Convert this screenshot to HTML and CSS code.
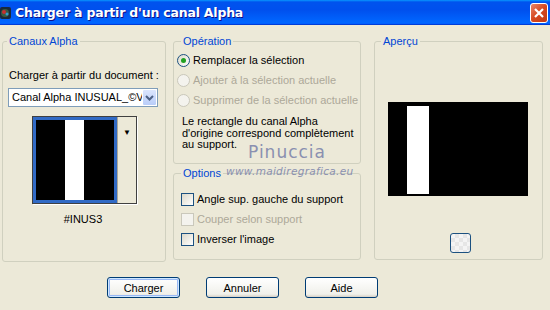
FILE: index.html
```html
<!DOCTYPE html>
<html lang="fr">
<head>
    <meta charset="UTF-8">
    <title>Charger à partir d'un canal Alpha</title>
    <link rel="stylesheet" href="styles.css">
</head>
<body>
    <div class="window">
        <!-- Title Bar -->
        <div class="titlebar">
            <svg class="app-icon" width="11" height="14" viewBox="0 0 11 14">
                <rect x="0" y="1" width="11" height="12" rx="2" fill="#1a2a3a"/>
                <circle cx="5" cy="7" r="4" fill="#3a5a40"/>
                <circle cx="4" cy="6" r="2" fill="#c83030"/>
                <circle cx="7" cy="8" r="1.5" fill="#30a0d0"/>
            </svg>
            <span class="title">Charger à partir d'un canal Alpha</span>
            <div class="close-btn">
                <svg width="12" height="12" viewBox="0 0 12 12">
                    <path d="M2 2 L10 10 M10 2 L2 10" stroke="#fff" stroke-width="2.2"/>
                </svg>
            </div>
        </div>

        <div class="content">
            <div class="panels">
                <!-- Canaux Alpha -->
                <fieldset class="group group-alpha">
                    <legend>Canaux Alpha</legend>
                    <div class="field-label">Charger à partir du document :</div>
                    <div class="select">
                        <span class="select-text">Canal Alpha INUSUAL_©Virginia</span>
                        <span class="select-btn">
                            <svg width="9" height="6" viewBox="0 0 9 6">
                                <path d="M1 1 L4.5 4.5 L8 1" fill="none" stroke="#4d6185" stroke-width="2"/>
                            </svg>
                        </span>
                    </div>
                    <div class="thumb-picker">
                        <div class="thumb">
                            <div class="thumb-bar"></div>
                        </div>
                        <div class="thumb-drop">&#9660;</div>
                    </div>
                    <div class="thumb-name">#INUS3</div>
                </fieldset>

                <div class="middle">
                    <!-- Opération -->
                    <fieldset class="group group-op">
                        <legend>Opération</legend>
                        <div class="option-row">
                            <span class="radio checked"></span>
                            <span>Remplacer la sélection</span>
                        </div>
                        <div class="option-row disabled">
                            <span class="radio"></span>
                            <span>Ajouter à la sélection actuelle</span>
                        </div>
                        <div class="option-row disabled">
                            <span class="radio"></span>
                            <span>Supprimer de la sélection actuelle</span>
                        </div>
                        <p class="note">Le rectangle du canal Alpha d'origine correspond complètement au support.</p>
                    </fieldset>

                    <!-- Options -->
                    <fieldset class="group group-opts">
                        <legend>Options</legend>
                        <div class="check-row">
                            <span class="checkbox"></span>
                            <span>Angle sup. gauche du support</span>
                        </div>
                        <div class="check-row disabled">
                            <span class="checkbox"></span>
                            <span>Couper selon support</span>
                        </div>
                        <div class="check-row">
                            <span class="checkbox"></span>
                            <span>Inverser l'image</span>
                        </div>
                    </fieldset>
                </div>

                <!-- Aperçu -->
                <fieldset class="group group-preview">
                    <legend>Aperçu</legend>
                    <div class="preview">
                        <div class="preview-bar"></div>
                    </div>
                    <div class="preview-btn"></div>
                </fieldset>
            </div>

            <!-- Buttons -->
            <div class="actions">
                <button class="btn btn-default">Charger</button>
                <button class="btn">Annuler</button>
                <button class="btn">Aide</button>
            </div>
        </div>

        <!-- Watermark -->
        <div class="watermark">
            <div class="wm-name">Pinuccia</div>
            <div class="wm-url">www.maidiregrafica.eu</div>
        </div>
    </div>
</body>
</html>
```

FILE: styles.css
```css
/* General Reset */
* {
    margin: 0;
    padding: 0;
    box-sizing: border-box;
}

body {
    background-color: #ece9d8;
    font-family: "Liberation Sans", Arial, sans-serif;
    font-size: 11px;
    color: #000;
}

.window {
    position: relative;
    width: 550px;
    height: 310px;
    overflow: hidden;
    background-color: #ece9d8;
}

/* Title Bar */
.titlebar {
    height: 25px;
    display: flex;
    align-items: center;
    background: linear-gradient(#0997ff 0, #0053ee 8%, #0050ee 40%, #0066ff 88%, #0066ff 93%, #005bff 95%, #003dd7 96%, #003dd7 100%);
    color: #fff;
}

.app-icon {
    margin-left: 0;
    margin-right: 4px;
}

.title {
    flex: 1;
    font-family: "DejaVu Sans", sans-serif;
    font-weight: bold;
    font-size: 12.5px;
    letter-spacing: -0.2px;
    text-shadow: 1px 1px #0f1089;
}

.close-btn {
    width: 18px;
    height: 20px;
    margin-right: 2px;
    margin-top: 1px;
    border: 1px solid #fff;
    border-radius: 3px;
    background: linear-gradient(135deg, #e8866a, #d6471e 50%, #c23a14);
    display: flex;
    align-items: center;
    justify-content: center;
}

/* Content */
.content {
    padding: 10px 0 0 2px;
}

.panels {
    display: flex;
    align-items: flex-start;
}

.group {
    border: 1px solid #d0d0bf;
    border-radius: 3px;
    padding: 0;
}

.group legend {
    color: #0046d5;
    padding: 0 2px;
    margin-left: 7px;
    line-height: 13px;
}

/* Canaux Alpha */
.group-alpha {
    width: 164px;
    height: 227px;
}

.group-alpha legend {
    margin-left: 4px;
}

.field-label {
    margin: 21px 0 0 6px;
    line-height: 13px;
}

.select {
    display: flex;
    width: 150px;
    height: 19px;
    margin: 6px 0 0 5px;
    border: 1px solid #7f9db9;
    background-color: #fff;
}

.select-text {
    flex: 1;
    overflow: hidden;
    white-space: nowrap;
    padding: 2px 0 0 3px;
}

.select-btn {
    width: 15px;
    height: 17px;
    background: linear-gradient(#dbe5fd, #b9cdf9);
    border: 1px solid #fff;
    border-radius: 2px;
    display: flex;
    align-items: center;
    justify-content: center;
}

.thumb-picker {
    display: flex;
    width: 105px;
    height: 88px;
    margin: 9px 0 0 29px;
    border: 1px solid #404040;
    box-shadow: 1px 1px 0 #fff;
}

.thumb {
    width: 84px;
    border: 3px solid #316ac5;
    background-color: #000;
    padding-left: 29px;
}

.thumb-bar {
    width: 19px;
    height: 100%;
    background-color: #fff;
}

.thumb-drop {
    flex: 1;
    border-left: 1px solid #aca899;
    font-size: 8px;
    text-align: center;
    padding-top: 11px;
}

.thumb-name {
    margin: 9px 0 0 0;
    padding-right: 2px;
    text-align: center;
    line-height: 13px;
}

/* Middle Column */
.middle {
    display: flex;
    flex-direction: column;
    gap: 3px;
    margin-left: 7px;
    width: 188px;
}

.group-op {
    height: 129px;
}

.group-opts {
    height: 93px;
}

.option-row,
.check-row {
    display: flex;
    align-items: center;
    height: 20px;
    white-space: nowrap;
}

.option-row {
    padding-left: 3px;
}

.group-op .option-row:first-of-type {
    margin-top: 2px;
}

.check-row {
    padding-left: 7px;
}

.group-opts .check-row:first-of-type {
    margin-top: 9px;
}

.disabled {
    color: #aca899;
}

.radio {
    width: 13px;
    height: 13px;
    margin-right: 3px;
    border: 1px solid #1c5180;
    border-radius: 50%;
    background: linear-gradient(135deg, #dcd9ca, #fff);
    display: flex;
    align-items: center;
    justify-content: center;
}

.radio.checked::after {
    content: "";
    width: 5px;
    height: 5px;
    border-radius: 50%;
    background-color: #21a121;
}

.disabled .radio,
.disabled .checkbox {
    border-color: #cac8bb;
    background: #f4f3ee;
}

.checkbox {
    width: 13px;
    height: 13px;
    margin-right: 3px;
    border: 1px solid #1c5180;
    background: linear-gradient(135deg, #dcd9ca, #fff);
}

.note {
    margin: 6px 4px 0 8px;
    line-height: 11.7px;
}

/* Aperçu */
.group-preview {
    width: 169px;
    height: 225px;
    margin-left: 13px;
}

.group-preview legend {
    margin-left: 6px;
}

.preview {
    width: 140px;
    height: 94px;
    margin: 54px 0 0 13px;
    background-color: #000;
    padding: 4px 0 2px 19px;
}

.preview-bar {
    width: 22px;
    height: 100%;
    background-color: #fff;
}

.preview-btn {
    width: 21px;
    height: 20px;
    margin: 37px 0 0 75px;
    border: 1px solid #1c5180;
    border-radius: 3px;
    background-color: #f4f4f4;
    background-image:
        linear-gradient(45deg, #e6e6e6 25%, transparent 25%, transparent 75%, #e6e6e6 75%),
        linear-gradient(45deg, #e6e6e6 25%, transparent 25%, transparent 75%, #e6e6e6 75%);
    background-size: 8px 8px;
    background-position: 0 0, 4px 4px;
}

/* Buttons */
.actions {
    display: flex;
    gap: 26px;
    margin: 15px 0 0 105px;
}

.btn {
    width: 73px;
    height: 21px;
    font-family: "Liberation Sans", Arial, sans-serif;
    font-size: 11px;
    color: #000;
    border: 1px solid #003c74;
    border-radius: 3px;
    background: linear-gradient(#fff, #f0f0ea 85%, #d6d0c5);
}

.btn-default {
    box-shadow: inset 0 0 0 1px #cee7ff, inset 0 0 0 2px #98b8f5;
}

/* Watermark */
.watermark {
    position: absolute;
    left: 226px;
    top: 143px;
    width: 122px;
    text-align: center;
    color: #8a90b0;
    pointer-events: none;
}

.wm-name {
    font-family: "DejaVu Sans", sans-serif;
    font-size: 17px;
    letter-spacing: 1px;
    line-height: 18px;
}

.wm-url {
    font-family: "DejaVu Sans", sans-serif;
    font-size: 10.5px;
    font-style: italic;
    line-height: 14px;
    letter-spacing: 0.3px;
    margin-top: 3px;
}
```
